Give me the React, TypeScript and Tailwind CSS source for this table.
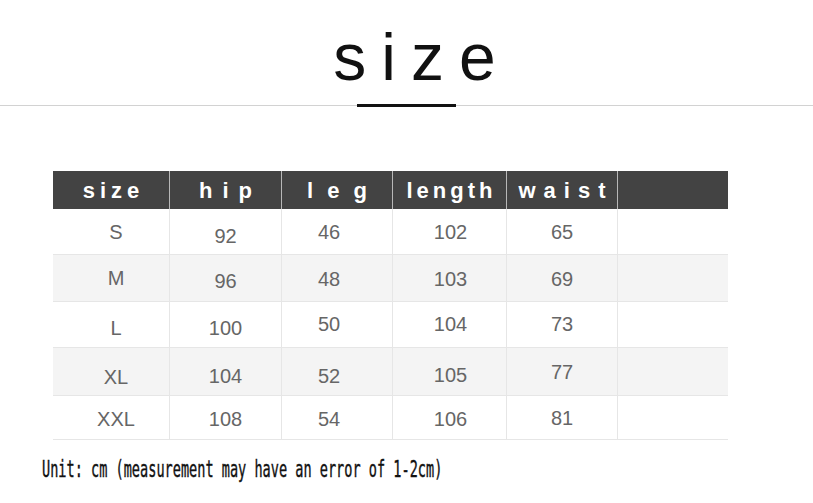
import React from "react";

const columns = [
  { label: "size", w: "w-[116px]", track: "tracking-[5px] pl-[5px]", body: "pl-[10px]" },
  { label: "hip", w: "w-[112px]", track: "tracking-[10px] pl-[10px]", body: "" },
  { label: "leg", w: "w-[111px]", track: "tracking-[14px] pl-[14px]", body: "pr-[16px]" },
  { label: "length", w: "w-[114px]", track: "tracking-[4px] pl-[4px]", body: "pl-[2px]" },
  { label: "waist", w: "w-[111px]", track: "tracking-[8px] pl-[8px]", body: "" },
  { label: "", w: "w-[111px]", track: "", body: "" },
];

// [value, vertical nudge] per cell — the source image isn't perfectly aligned
const rows: { h: string; bg: string; cells: [string, string][] }[] = [
  {
    h: "h-[46px]",
    bg: "bg-white",
    cells: [["S", ""], ["92", "pt-[8px]"], ["46", ""], ["102", ""], ["65", ""], ["", ""]],
  },
  {
    h: "h-[47px]",
    bg: "bg-[#f4f4f4]",
    cells: [["M", ""], ["96", "pt-[5px]"], ["48", "pt-[2px]"], ["103", "pt-[2px]"], ["69", "pt-[2px]"], ["", ""]],
  },
  {
    h: "h-[46px]",
    bg: "bg-white",
    cells: [["L", "pt-[6px]"], ["100", "pt-[6px]"], ["50", "pb-[2px]"], ["104", "pb-[2px]"], ["73", "pb-[2px]"], ["", ""]],
  },
  {
    h: "h-[48px]",
    bg: "bg-[#f4f4f4]",
    cells: [["XL", "pt-[10px]"], ["104", "pt-[8px]"], ["52", "pt-[8px]"], ["105", "pt-[6px]"], ["77", ""], ["", ""]],
  },
  {
    h: "h-[44px]",
    bg: "bg-white",
    cells: [["XXL", "pt-[2px]"], ["108", "pt-[2px]"], ["54", "pt-[2px]"], ["106", "pt-[2px]"], ["81", ""], ["", ""]],
  },
];

export default function App() {
  return (
    <div className="w-[813px] h-[503px] bg-white overflow-hidden font-['Liberation_Sans',Arial,sans-serif]">
      <div className="flex justify-center pl-[31px] pt-[24px]">
        <h1 className="text-[66px] leading-none font-normal tracking-[15px] text-[#111]">size</h1>
      </div>

      <div className="flex items-center mt-[14px]">
        <div className="flex-1 h-px bg-[#d2d2d2]" />
        <div className="w-[99px] h-[3px] bg-[#111]" />
        <div className="flex-1 h-px bg-[#d2d2d2]" />
      </div>

      <div className="ml-[53px] mt-[64px] w-[675px]">
        <div className="flex h-[38px] bg-[#434343]">
          {columns.map((c, i) => (
            <div
              key={i}
              className={`${c.w} flex items-center justify-center ${i > 0 ? "border-l border-[#b8b8b8]" : ""}`}
            >
              <span className={`text-[22px] font-bold text-white ${c.track}`}>{c.label}</span>
            </div>
          ))}
        </div>

        {rows.map((r, ri) => (
          <div key={ri} className={`flex ${r.h} ${r.bg} border-b border-[#e6e6e6]`}>
            {r.cells.map(([v, nudge], ci) => (
              <div
                key={ci}
                className={`${columns[ci].w} flex items-center justify-center ${columns[ci].body} ${nudge} ${ci > 0 ? "border-l border-[#e6e6e6]" : ""}`}
              >
                <span className="text-[20px] text-[#666]">{v}</span>
              </div>
            ))}
          </div>
        ))}
      </div>

      <div className="ml-[42px] mt-[18px]">
        <p className="inline-block origin-left scale-x-[0.59] whitespace-nowrap font-['DejaVu_Sans_Mono',monospace] text-[23px] leading-[23px] text-[#111] [-webkit-text-stroke:0.4px_#111]">
          Unit: cm (measurement may have an error of 1-2cm)
        </p>
      </div>
    </div>
  );
}
